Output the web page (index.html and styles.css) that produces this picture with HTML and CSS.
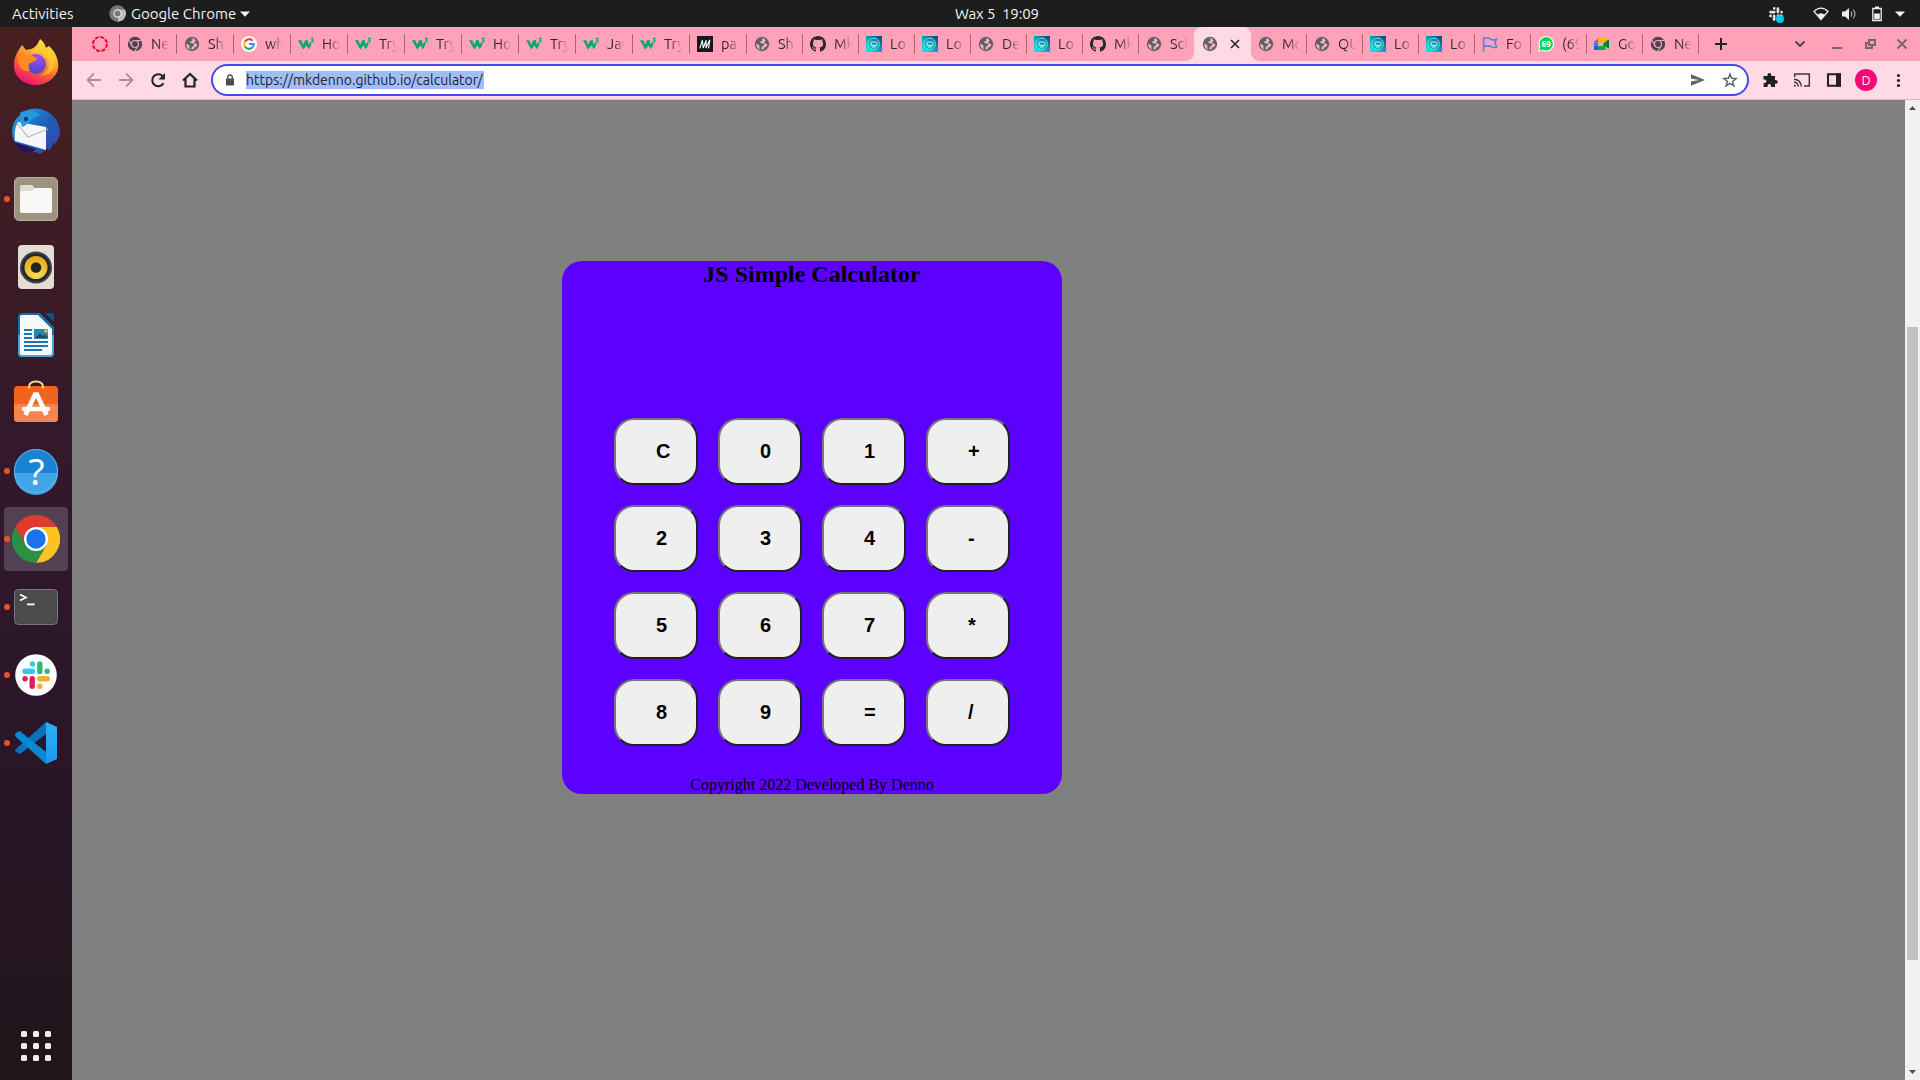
FILE: index.html
```html
<!DOCTYPE html>
<html lang="en">
<head>
<meta charset="utf-8">
<title>Desktop</title>
<link rel="stylesheet" href="styles.css">
</head>
<body>
<svg class="defs" width="0" height="0">
  <defs>
    <linearGradient id="teal" x1="0" y1="1" x2="1" y2="0"><stop offset="0" stop-color="#15f3ec"/><stop offset=".5" stop-color="#109fb9"/><stop offset="1" stop-color="#064770"/></linearGradient>
    <linearGradient id="fox" x1=".8" y1="0" x2=".3" y2="1"><stop offset="0" stop-color="#fff44f"/><stop offset=".35" stop-color="#ffb42c"/><stop offset=".65" stop-color="#ff5f2e"/><stop offset="1" stop-color="#e8107c"/></linearGradient>
    <radialGradient id="foxglobe" cx=".6" cy=".2" r=".9"><stop offset="0" stop-color="#a24cf5"/><stop offset="1" stop-color="#4346c6"/></radialGradient>
    <linearGradient id="bird" x1="0" y1="0" x2="1" y2="1"><stop offset="0" stop-color="#2ea3e8"/><stop offset=".5" stop-color="#1b62b8"/><stop offset="1" stop-color="#3d3fa8"/></linearGradient>
    <radialGradient id="cone" cx=".5" cy=".8" r=".9"><stop offset="0" stop-color="#ffd95a"/><stop offset="1" stop-color="#e2a208"/></radialGradient>
    <linearGradient id="vs" x1="0" y1="0" x2="0" y2="1"><stop offset="0" stop-color="#2bb2f6"/><stop offset="1" stop-color="#2196ee"/></linearGradient>
    <symbol id="globe" viewBox="0 0 16 16"><circle cx="8" cy="8" r="7.200" fill="#5f6368"/><path d="M7.200 2.300 8.700 3.200 8.300 4.700 6.600 5.400 6.200 7 9.100 7.200 10.200 8.800 9.400 10.300 7.900 10.700 7.200 13.600 9.500 13.300 10.200 11.600 12.200 10.800 13.200 8.400 12 7.600 10.300 7.400 10.200 5.800 11.800 4.800 10.600 3.200 9.200 2.300ZM2.400 7.500 5.300 9.300 5.400 11.700 6.100 13.400A5.700 5.700 0 0 1 2.400 7.500Z" fill="#ffb4c8"/></symbol>
    <symbol id="chrome-mono" viewBox="0 0 16 16"><circle cx="8" cy="8" r="7.200" fill="#45474c"/><circle cx="8" cy="8" r="3.500" fill="none" stroke="#ffa1b9" stroke-width="1.200"/><path d="M8 4.500h6.400M5 9.800 1.800 4.200M11 9.800 7.800 15.200" stroke="#ffa1b9" stroke-width="1.100"/></symbol>
    <symbol id="google" viewBox="0 0 16 16"><circle cx="8" cy="8" r="8" fill="#fff"/><g fill="none" stroke-width="2.100"><path d="M11.600 4.700A4.800 4.800 0 0 0 3.800 5.800" stroke="#ea4335"/><path d="M3.800 5.800a4.800 4.800 0 0 0 0 4.600" stroke="#fbbc05"/><path d="M3.800 10.400a4.800 4.800 0 0 0 7.600 1" stroke="#34a853"/><path d="M11.200 11.500A4.700 4.700 0 0 0 12.800 8H8" stroke="#4285f4"/></g></symbol>
    <symbol id="w3" viewBox="0 0 16 16"><path d="M0 4.200h3.300l1.900 4.600 1.900-4.600h3.200l-.5 1.300 1.100 2.900 1.600-2.900 1 3.100-2.600 4.600-2.500-3.700-3.200 3.900Z" fill="#04aa6d"/><path d="M12.600 2.300h2.500L13.900 4c1.900 0 1.500 2.600-1 2" fill="none" stroke="#04aa6d" stroke-width="1.100"/></symbol>
    <symbol id="m-logo" viewBox="0 0 16 16"><path d="M0 0h16v16H0z" fill="#15161f"/><path d="M2.800 12.300 5.400 4.200 6.200 12 9.200 4.200 8.900 12 12.800 3.800 11.500 12.300" fill="none" stroke="#fff" stroke-width="1.100"/></symbol>
    <symbol id="github" viewBox="0 0 16 16"><path fill="#24292f" d="M8 0C3.580 0 0 3.580 0 8c0 3.540 2.290 6.530 5.470 7.590.4.070.55-.170.55-.380 0-.190-.010-.820-.010-1.490-2.010.370-2.530-.490-2.690-.940-.090-.230-.480-.940-.820-1.130-.280-.150-.680-.520-.010-.530.630-.010 1.080.580 1.230.820.720 1.210 1.870.870 2.330.660.070-.520.280-.870.510-1.070-1.780-.200-3.640-.890-3.640-3.950 0-.870.310-1.590.820-2.150-.080-.200-.360-1.020.080-2.120 0 0 .670-.210 2.200.820a7.600 7.600 0 0 1 4 0c1.530-1.040 2.200-.820 2.200-.820.440 1.100.160 1.920.080 2.120.510.560.820 1.270.820 2.150 0 3.070-1.870 3.750-3.650 3.950.290.250.540.730.540 1.480 0 1.070-.010 1.930-.010 2.200 0 .210.150.460.550.380A8.010 8.010 0 0 0 16 8c0-4.420-3.580-8-8-8z"/></symbol>
    <symbol id="loco" viewBox="0 0 16 16"><path d="M0 0h16v16H0z" fill="url(#teal)"/><g fill="none" stroke="#72dce9"><circle cx="7.600" cy="8" r="5.800"/><path d="M5 6h6v3.500H5zM6 11h4" stroke="#b5f2f5"/></g></symbol>
    <symbol id="flag" viewBox="0 0 16 16"><path d="M1.600 15.500V2h5.600c1 2 2.500 2 3.600 2 .9 0 2.500-.3 3.700-.8L13 6.500l1.500 4.500c-1.500.7-4.500.9-6-.9H1.600" fill="none" stroke="#4f83e6" stroke-width="1.600"/></symbol>
    <symbol id="whatsapp" viewBox="0 0 16 16"><circle cx="8.200" cy="7.800" r="7.800" fill="#fff"/><path d="M0 16 1 11.500 4.500 15Z" fill="#fff"/><circle cx="8.200" cy="7.800" r="6.700" fill="#00d757"/><path d="M1.400 14.700 2.300 10.500 5 14Z" fill="#00d757"/><text x="8.200" y="10.700" text-anchor="middle" class="badge-text">69</text></symbol>
    <symbol id="meet" viewBox="0 0 16 16"><path d="M0 6.200h4v4H0z" fill="#2684fc"/><path d="M0 6.200 4.200 2v4.200Z" fill="#ea4335"/><path d="M0 10v2.800A1.200 1.200 0 0 0 1.200 14H4v-4z" fill="#0066da"/><path d="M4 2h6.500a1.200 1.200 0 0 1 1.200 1.200V8H9V6H4z" fill="#ffba00"/><path d="M4 10h5V8h2.700v4.800a1.200 1.200 0 0 1-1.200 1.200H4z" fill="#00ac47"/><path d="M9 8l5-4.300c.500-.400 1-.2 1 .4v7.800c0 .6-.5.8-1 .4Z" fill="#00832d"/></symbol>
    <symbol id="slack" viewBox="0 0 28 28"><g stroke-width="5.400" stroke-linecap="round"><path class="s1" d="M3 10.200h7.500M10.500 3v-.1"/><path class="s2" d="M17.800 3v7.500M25.200 10.200h-.1"/><path class="s3" d="M17.800 17.800h7.400M17.800 25.200v-.1"/><path class="s4" d="M10.200 17.800v7.400M3 17.800h.1"/></g></symbol>
  </defs>
</svg>

<header class="topbar">
  <span class="activities">Activities</span>
  <div class="appmenu">
    <svg width="17" height="17" viewBox="0 0 17 17"><circle cx="8.500" cy="8.500" r="8.200" fill="#777"/><path d="M8.500 4.500H16A8.200 8.200 0 0 1 9 16.700Z" fill="#bcbcbc"/><circle cx="8.500" cy="8.500" r="4.200" fill="#e5e5e5"/><circle cx="8.500" cy="8.500" r="3" fill="#777"/></svg>
    <span class="appname">Google Chrome</span>
    <svg width="10" height="6" viewBox="0 0 10 6"><path d="M0 .5h10L5 5.800z" fill="#f2f2f2"/></svg>
  </div>
  <span class="clock">Wax 5&nbsp; 19:09</span>
  <div class="status">
    <span class="slackstatus"><svg class="mono" width="14" height="14"><use href="#slack"/></svg><i></i></span>
    <svg width="16" height="14" viewBox="0 0 16 14"><path d="M1 4.500C5 0 11 0 15 4.500L8 12.500Z" fill="none" stroke="#ededed" stroke-width="1.200"/><path d="M4 7.800c2.500-2 5.500-2 8 0L8 13Z" fill="#ededed"/></svg>
    <svg width="16" height="14" viewBox="0 0 16 14"><path d="M1 4.500h3L8 1v12L4 9.500H1z" fill="#ededed"/><path d="M10 4.500q1.500 2.500 0 5M12.300 2.500q3.200 4.500 0 9" fill="none" stroke="#aaa" stroke-width="1.200"/></svg>
    <svg width="12" height="16" viewBox="0 0 12 16"><path d="M1.800 2.500h8.400v12H1.800z" fill="none" stroke="#ededed" stroke-width="1.300"/><path d="M4 .5h4v2H4zM3.200 7.500h5.600v5.700H3.200z" fill="#ededed"/></svg>
    <svg width="10" height="6" viewBox="0 0 10 6"><path d="M0 .5h10L5 5.800z" fill="#f2f2f2"/></svg>
  </div>
</header>

<div class="desktop">
  <nav class="dock">
    <div class="app"><svg viewBox="0 1 48 48"><path d="M8 10l2-3 4 5 5-1c3-1 6-3 9-10 4 3 5 6 6 9l3-2c7 6 10 15 9 23-2 9-12 16-22 16C12 47 2 39 2 28 2 19 5 15 8 10Z" fill="url(#fox)"/><circle cx="24" cy="26" r="10" fill="url(#foxglobe)"/><path d="M6 19c5-3 9-2 13-2l6 3c-1 4-5 4-8 6-1 3 0 5 1 7C9 35 5 25 6 19Z" fill="#ff8b22"/><path d="M19 15c6-4 14-1 17 6 3 9-2 15-8 16 12 2 17-9 14-20-5-1-5-6-5-9-3 3-6 1-8-2-4 5-8 6-10 9Z" fill="#ffcf35" opacity=".6"/></svg></div>
    <div class="app"><svg viewBox="0 0 48 48"><path d="M18 2C33-1 46 9 48 23c0 7-3 12-6 15l1-4-6 10-1-3-8 6-4-2C12 47 0 39 0 25 0 16 5 9 13 4Z" fill="url(#bird)"/><path d="M6 15 34 20 34 43 3 34C2 26 3 20 6 15Z" fill="#f5f6fa"/><path d="M5 16 16 30 36 22" fill="none" stroke="#b7b9c3" stroke-width="1.200"/><path d="M8 6c7-5 17-3 20 3-10 0-9 8-18 11L9 17Z" fill="#239be3"/><circle cx="14" cy="12" r="2.200" fill="#17386c"/><path d="M2 35 24 42 20 46C11 46 5 42 2 35Z" fill="#261358"/></svg></div>
    <div class="app run"><svg viewBox="0 0 48 48"><rect x="2.500" y="2.500" width="43" height="43" rx="4.500" fill="#9c937f" stroke="#b5ad9b"/><path d="M8 13q0-3 2-3h10l3.500 4v5H8Z" fill="#dfdbd2"/><path d="M8 18q0-2 2-2h10l3-3h15q2 0 2 2v21q0 2-2 2H10q-2 0-2-2Z" fill="#f9f8f7"/></svg></div>
    <div class="app"><svg viewBox="0 0 48 48"><rect x="6" y="2" width="36" height="44" rx="4" fill="#e3ded3"/><circle cx="24" cy="24.500" r="16" fill="#414149"/><circle cx="24" cy="24.500" r="14" fill="#232530"/><circle cx="24" cy="24.500" r="11.500" fill="url(#cone)"/><circle cx="24" cy="24.500" r="5.300" fill="#252525"/></svg></div>
    <div class="app"><svg viewBox="0 0 48 48"><path d="M10 2h18l14 14v26q0 4-4 4H10q-4 0-4-4V6q0-4 4-4Z" fill="#156ea4"/><path d="M6 24h36v18q0 4-4 4H10q-4 0-4-4Z" fill="#4aa5d5"/><path d="M10 4h16l14 14v23q0 3-2 3H10q-2 0-2-2V6q0-2 2-2Z" fill="#f7f8f9"/><path d="M33 2h7q2 0 2 2v7Z" fill="#0c557e"/><path d="M12 19h8M12 23h8M12 27h8M12 31h24M12 35h24M12 39h18" stroke="#1a78b1" stroke-width="1.800"/><path d="M22 18h14v10H22z" fill="#2387bb"/><path d="M23 27l5-5 3 3 2-2 3 4Z" fill="#404548"/><circle cx="34" cy="20" r="1.800" fill="#ffc727"/></svg></div>
    <div class="app"><svg viewBox="0 2 48 48"><rect x="2" y="9" width="44" height="36" rx="4" fill="#f1641f"/><path d="M2 27h44v14q0 4-4 4H6q-4 0-4-4Z" fill="#f58450"/><path d="M17 11.500V10q0-5.500 7-5.500T31 10v1.500" fill="none" stroke="#f1d6a2" stroke-width="2"/><path d="M13.500 38 23 17.500h2L34.500 38" fill="none" stroke="#fff" stroke-width="4.600"/><path d="M12 32h24" stroke="#fff" stroke-width="4.500" stroke-linecap="round"/></svg></div>
    <div class="app run"><svg viewBox="0 0 48 48"><circle cx="24" cy="24" r="22" fill="#1b83d4"/><path d="M2 26h44a22 22 0 0 1-44 0Z" fill="#42a4e5"/><circle cx="24" cy="24" r="21.500" fill="none" stroke="#64b5ed"/><text x="24.500" y="37.500" class="help" text-anchor="middle">?</text></svg></div>
    <div class="app run active"><svg viewBox="0 0 48 48"><path d="M24 12H44.800A24 24 0 0 0 3.200 12L13.600 30Z" fill="#df3a2e"/><path d="M34.400 30 24 48A24 24 0 0 0 44.800 12H24Z" fill="#fdc321"/><path d="M13.600 30 3.200 12A24 24 0 0 0 24 48L34.400 30Z" fill="#289144"/><circle cx="24" cy="24" r="12" fill="#fff"/><circle cx="24" cy="24" r="9.700" fill="#1a73e8"/></svg></div>
    <div class="app run"><svg viewBox="0 0 48 48"><rect x="2.500" y="6.500" width="43" height="35" rx="4" fill="#4b4b4b" stroke="#777"/><path d="M8 11.500l6 3L8 17.500M15 21.300H22.700" fill="none" stroke="#fff" stroke-width="1.700"/></svg></div>
    <div class="app run"><svg viewBox="0 0 48 48"><circle cx="24" cy="24" r="20.800" fill="#fff"/><svg x="10" y="10" width="28" height="28"><use href="#slack"/></svg></svg></div>
    <div class="app run"><svg viewBox="0 0 48 48"><path d="M3 32q0-1 1-2L34 3v12L8 35q-1 0-2-1Z" fill="#0873b8"/><path d="M3 16q0-1 1-2l3-2q1 0 2 1l25 20v12L4 18Z" fill="#0689d5"/><path d="M34 3l11 5v32l-11 5Z" fill="url(#vs)"/></svg></div>
    <div class="app launcher"><svg viewBox="0 0 48 48"><g fill="#f1efec"><rect x="9" y="9" width="6" height="6" rx="1.500"/><rect x="21" y="9" width="6" height="6" rx="1.500"/><rect x="33" y="9" width="6" height="6" rx="1.500"/><rect x="9" y="21" width="6" height="6" rx="1.500"/><rect x="21" y="21" width="6" height="6" rx="1.500"/><rect x="33" y="21" width="6" height="6" rx="1.500"/><rect x="9" y="33" width="6" height="6" rx="1.500"/><rect x="21" y="33" width="6" height="6" rx="1.500"/><rect x="33" y="33" width="6" height="6" rx="1.500"/></g></svg></div>
  </nav>

  <div class="browser">
    <div class="tabs">
      <div class="tab pinned"><svg viewBox="0 0 16 16"><circle cx="8" cy="8" r="7" fill="none" stroke="#f5001d" stroke-width="2" stroke-dasharray="4 1.500"/></svg></div>
      <div class="tab wide"><svg><use href="#chrome-mono"/></svg><span>Ne</span></div>
      <div class="tab wide"><svg><use href="#globe"/></svg><span>Sh</span></div>
      <div class="tab wide"><svg><use href="#google"/></svg><span>wh</span></div>
      <div class="tab wide"><svg><use href="#w3"/></svg><span>Ho</span></div>
      <div class="tab wide"><svg><use href="#w3"/></svg><span>Try</span></div>
      <div class="tab wide"><svg><use href="#w3"/></svg><span>Try</span></div>
      <div class="tab wide"><svg><use href="#w3"/></svg><span>Ho</span></div>
      <div class="tab wide"><svg><use href="#w3"/></svg><span>Try</span></div>
      <div class="tab wide"><svg><use href="#w3"/></svg><span>Jav</span></div>
      <div class="tab wide"><svg><use href="#w3"/></svg><span>Try</span></div>
      <div class="tab wide"><svg><use href="#m-logo"/></svg><span>pa</span></div>
      <div class="tab"><svg><use href="#globe"/></svg><span>Sh</span></div>
      <div class="tab"><svg><use href="#github"/></svg><span>Mk</span></div>
      <div class="tab"><svg><use href="#loco"/></svg><span>Lo</span></div>
      <div class="tab"><svg><use href="#loco"/></svg><span>Lo</span></div>
      <div class="tab"><svg><use href="#globe"/></svg><span>De</span></div>
      <div class="tab"><svg><use href="#loco"/></svg><span>Lo</span></div>
      <div class="tab"><svg><use href="#github"/></svg><span>Mk</span></div>
      <div class="tab nosep"><svg><use href="#globe"/></svg><span>Sch</span></div>
      <div class="tab current"><svg><use href="#globe"/></svg><svg class="x" viewBox="0 0 16 16"><path d="M4 4l8 8M12 4l-8 8" stroke="#2b2226" stroke-width="1.600"/></svg></div>
      <div class="tab"><svg><use href="#globe"/></svg><span>Mo</span></div>
      <div class="tab"><svg><use href="#globe"/></svg><span>QU</span></div>
      <div class="tab"><svg><use href="#loco"/></svg><span>Lo</span></div>
      <div class="tab"><svg><use href="#loco"/></svg><span>Lo</span></div>
      <div class="tab"><svg><use href="#flag"/></svg><span>Fo</span></div>
      <div class="tab"><svg><use href="#whatsapp"/></svg><span>(69</span></div>
      <div class="tab"><svg><use href="#meet"/></svg><span>Go</span></div>
      <div class="tab"><svg><use href="#chrome-mono"/></svg><span>Ne</span></div>
      <svg class="plus" viewBox="0 0 16 16"><path d="M8 2v12M2 8h12" stroke="#242124" stroke-width="2"/></svg>
      <div class="winctl">
        <svg viewBox="0 0 16 16"><path d="M3.500 5.500 8 10l4.500-4.500" fill="none" stroke="#4b3c43" stroke-width="1.800"/></svg>
        <svg viewBox="0 0 16 16"><path d="M3 12h10" stroke="#76636c" stroke-width="2"/></svg>
        <svg viewBox="0 0 16 16"><path d="M7 4h6v5H7zM6 7H4v5h6v-2" fill="none" stroke="#76636c" stroke-width="1.900"/></svg>
        <svg viewBox="0 0 16 16"><path d="M3.500 3.500l9 9M12.500 3.500l-9 9" stroke="#76636c" stroke-width="1.900"/></svg>
      </div>
    </div>

    <div class="toolbar">
      <svg viewBox="0 0 32 32"><path d="M23 16H10M16 9.500 9.500 16l6.500 6.500" fill="none" stroke="#aa9098" stroke-width="1.800"/></svg>
      <svg viewBox="0 0 32 32"><path d="M9 16h13M16 9.500l6.500 6.500-6.500 6.500" fill="none" stroke="#aa9098" stroke-width="1.800"/></svg>
      <svg viewBox="0 0 32 32"><path d="M21.500 19.200A6 6 0 1 1 20.500 12" fill="none" stroke="#202124" stroke-width="2.100"/><path d="M23 9v6.500h-6.500Z" fill="#202124"/></svg>
      <svg viewBox="0 0 32 32"><path d="M9 16.500 16 10l7 6.500M11.500 15v7.500h9V15" fill="none" stroke="#202124" stroke-width="2.200"/></svg>
      <div class="omnibox">
        <svg class="lock" viewBox="0 0 10 12"><path d="M1 4.500h8v7H1z" fill="#4b4d51"/><path d="M2.700 5V3.300a2.300 2.300 0 0 1 4.600 0V5" fill="none" stroke="#4b4d51" stroke-width="1.300"/></svg>
        <span class="url">https://mkdenno.github.io/calculator/</span>
        <div class="actions">
          <svg viewBox="0 0 16 16"><path d="M1 2.200 15 8 1 13.800V9.500L9 8 1 6.500Z" fill="#5f6368"/></svg>
          <svg viewBox="0 0 16 16"><path d="M8 2l1.600 4.300 4.600.2-3.600 2.900 1.300 4.400L8 11.300l-3.900 2.500 1.300-4.400L1.800 6.500l4.600-.2Z" fill="none" stroke="#5f6368" stroke-width="1.400"/></svg>
        </div>
      </div>
      <svg viewBox="0 0 32 32"><path d="M9.500 12h4v-1.200a1.900 1.900 0 0 1 3.800 0V12h3.700v4h.8a1.900 1.900 0 0 1 0 3.800H21V23h-4v-1.200a1.700 1.700 0 0 0-3.400 0V23h-4v-4h1.100a1.700 1.700 0 0 0 0-3.400H9.500Z" fill="#202124"/></svg>
      <svg viewBox="0 0 32 32"><path d="M8.700 13v-3h14.600v12H18M8 15.200a7.300 7.300 0 0 1 7.300 7.300M8 18.200a4.300 4.300 0 0 1 4.300 4.300" fill="none" stroke="#3b373a" stroke-width="1.500"/><path d="M8 20.500a2 2 0 0 1 2 2H8Z" fill="#3b373a"/></svg>
      <svg viewBox="0 0 32 32"><path d="M10 10.200h12v11.600H10z" fill="none" stroke="#202124" stroke-width="2"/><path d="M18 9.500h5v13h-5z" fill="#202124"/></svg>
      <span class="avatar">D</span>
      <svg viewBox="0 0 32 32"><g fill="#202124"><circle cx="16.500" cy="11.500" r="1.600"/><circle cx="16.500" cy="16.500" r="1.600"/><circle cx="16.500" cy="21.500" r="1.600"/></g></svg>
    </div>

    <div class="viewport">
      <main class="page">
        <section class="calculator">
          <h1>JS Simple Calculator</h1>
          <div class="keys">
            <button>C</button><button>0</button><button>1</button><button>+</button>
            <button>2</button><button>3</button><button>4</button><button>-</button>
            <button>5</button><button>6</button><button>7</button><button>*</button>
            <button>8</button><button>9</button><button>=</button><button>/</button>
          </div>
          <p>Copyright 2022 Developed By Denno</p>
        </section>
      </main>
      <div class="scrollbar">
        <svg viewBox="0 0 15 15"><path d="M4 10 7.500 6 11 10Z" fill="#505050"/></svg>
        <div class="thumb"></div>
        <svg viewBox="0 0 15 15"><path d="M4 5 7.500 9 11 5Z" fill="#505050"/></svg>
      </div>
    </div>
  </div>
</div>
</body>
</html>
```
FILE: styles.css
```css
* { box-sizing: border-box; }
body {
  margin: 0;
  width: 1920px;
  height: 1080px;
  overflow: hidden;
  display: flex;
  flex-direction: column;
  font-family: Ubuntu, "Noto Sans", sans-serif;
}
svg { display: block; flex: none; }
.defs { height: 0; }

/* GNOME top bar */
.topbar {
  height: 27px;
  flex: none;
  display: grid;
  grid-template-columns: 97px 846px 1fr auto;
  align-items: center;
  padding: 0 15px 0 12px;
  background: #1d1d1d;
  color: #f2f2f2;
  font-size: 15px;
  line-height: 26px;
  white-space: nowrap;
}
.appmenu { display: flex; align-items: center; gap: 5px; }
.appname { width: 104px; }
.clock { letter-spacing: -.1px; }
.status { display: flex; align-items: center; }
.status > svg:nth-of-type(1) { margin-left: 30px; }
.status > svg:nth-of-type(2) { margin-left: 12px; }
.status > svg:nth-of-type(3) { margin-left: 14px; }
.status > svg:nth-of-type(4) { margin-left: 12px; }
.slackstatus { position: relative; }
.slackstatus i {
  position: absolute;
  right: -1px;
  bottom: -2px;
  width: 8px;
  height: 8px;
  border-radius: 50%;
  background: #00c8f0;
}
.s1 { stroke: var(--mark, #36c5f0); }
.s2 { stroke: var(--mark, #2eb67d); }
.s3 { stroke: var(--mark, #ecb22e); }
.s4 { stroke: var(--mark, #e01e5a); }
.mono { --mark: #e2e2e2; }

.desktop { flex: 1; display: flex; min-height: 0; }

/* Dock */
.dock {
  width: 72px;
  flex: none;
  display: flex;
  flex-direction: column;
  padding-top: 2px;
  background: linear-gradient(#482020 0, #3b1b27 25%, #31182b 45%, #291628 68%, #21151a 100%);
}
.app {
  position: relative;
  width: 64px;
  height: 64px;
  margin: 2px 4px;
  flex: none;
  display: flex;
  align-items: center;
  justify-content: center;
  border-radius: 4px;
}
.app > svg { width: 48px; height: 48px; }
.app.active { background: #534052; }
.app.run::before {
  content: "";
  position: absolute;
  left: 0;
  top: 29px;
  width: 6px;
  height: 6px;
  border-radius: 50%;
  background: #e95420;
}
.launcher { margin-top: auto; }
.help { font: 37px "Noto Sans", sans-serif; fill: #fff; }
.badge-text { font: bold 8px "Noto Sans", sans-serif; fill: #fff; }

/* Browser */
.browser { flex: 1; min-width: 0; display: flex; flex-direction: column; }
.tabs {
  height: 34px;
  flex: none;
  display: flex;
  background: #ffa1b9;
  color: #30242a;
}
.tab {
  position: relative;
  width: 56px;
  flex: none;
  display: flex;
  align-items: center;
  gap: 8px;
  padding-left: 7px;
}
.tab > svg { width: 16px; height: 16px; }
.tab.wide { width: 57px; }
.tab.pinned { width: 48px; padding-left: 20px; }
.tab:not(.current):not(.nosep)::after {
  content: "";
  position: absolute;
  right: 0;
  top: 7px;
  width: 1px;
  height: 20px;
  background: #a36779;
}
.tab span {
  width: 18px;
  overflow: hidden;
  white-space: nowrap;
  font-size: 14.5px;
  line-height: 20px;
  -webkit-mask-image: linear-gradient(90deg, #000 35%, transparent);
  mask-image: linear-gradient(90deg, #000 35%, transparent);
}
.tab.current {
  width: 57px;
  gap: 9px;
  margin-left: -1px;
  padding-left: 8px;
  background: #ffdae4;
  border-radius: 8px 8px 0 0;
}
.tab.current::before, .tab.current::after {
  content: "";
  position: absolute;
  bottom: 0;
  width: 8px;
  height: 8px;
}
.tab.current::before { left: -8px; background: radial-gradient(circle at 0 0, transparent 7.5px, #ffdae4 8px); }
.tab.current::after { right: -8px; background: radial-gradient(circle at 100% 0, transparent 7.5px, #ffdae4 8px); }
.plus { width: 16px; height: 16px; margin: 9px 0 0 14px; }
.winctl { display: flex; align-items: center; margin-left: auto; padding-right: 10px; gap: 16.5px; }
.winctl svg { width: 16px; height: 16px; }
.winctl svg:first-child { margin-right: 5px; }

.toolbar {
  height: 39px;
  flex: none;
  display: flex;
  align-items: center;
  padding: 0 6px;
  background: #ffdae4;
  border-bottom: 1px solid #d6b8c1;
}
.toolbar > svg { width: 32px; height: 32px; }
.omnibox {
  flex: 1;
  height: 32px;
  margin: 0 5px;
  padding: 0 9px 0 12px;
  display: flex;
  align-items: center;
  border: 2px solid #474aea;
  border-radius: 16px;
  background: #fff;
}
.lock { width: 10px; height: 12px; }
.url {
  width: 238px;
  margin-left: 11px;
  background: #a0bdf7;
  color: #20232c;
  font-size: 14px;
  line-height: 18px;
  height: 18px;
  white-space: nowrap;
}
.actions { margin-left: auto; display: flex; gap: 16px; }
.actions svg { width: 16px; height: 16px; }
.avatar {
  width: 22px;
  height: 22px;
  margin: 0 5px;
  border-radius: 50%;
  background: #fb0578;
  color: #fff;
  font-size: 13px;
  line-height: 22px;
  text-align: center;
}

.viewport { flex: 1; display: flex; min-height: 0; }
.page { flex: 1; background: #808080; padding: 161px 0 0 490px; }
.scrollbar {
  width: 15px;
  display: flex;
  flex-direction: column;
  justify-content: space-between;
  background: #f1f1f1;
}
.scrollbar svg { width: 15px; height: 15px; }
.thumb { width: 11px; height: 633px; margin: 212px 2px auto; background: #c1c1c1; }

.calculator {
  width: 500px;
  height: 533px;
  display: flex;
  flex-direction: column;
  border-radius: 20px;
  background: #5c00ff;
  color: #000;
  font-family: "Liberation Serif", serif;
  text-align: center;
}
.calculator h1 { margin: 0; font-size: 24px; line-height: 27px; }
.keys {
  margin: 130px 0 0 52px;
  display: grid;
  grid-template-columns: repeat(4, 84px);
  grid-auto-rows: 67px;
  gap: 20px;
}
.keys button {
  padding: 0 0 0 40px;
  border: 2px solid;
  border-color: #767676 #212121 #212121 #767676;
  border-radius: 20px;
  background: #efefef;
  color: #000;
  font: bold 20px "Liberation Sans", sans-serif;
  text-align: left;
}
.calculator p { margin: auto 0 0; font-size: 16px; line-height: 18px; }
```
